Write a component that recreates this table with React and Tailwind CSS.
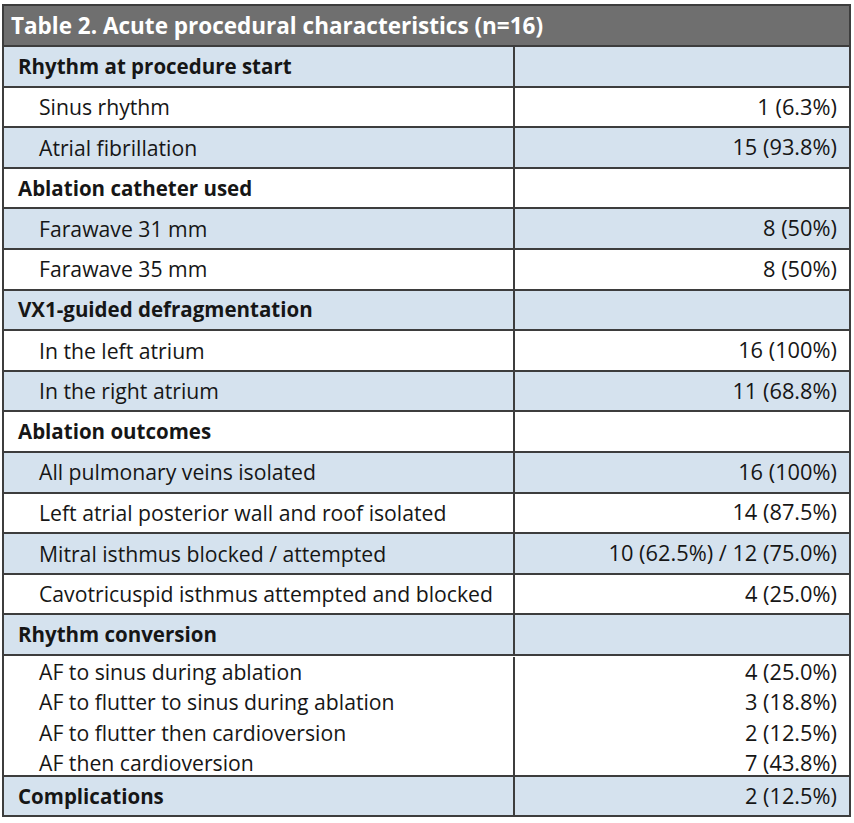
import React from 'react';

const rows = [
    { label: 'Rhythm at procedure start', section: true },
    { label: 'Sinus rhythm', value: '1 (6.3%)' },
    { label: 'Atrial fibrillation', value: '15 (93.8%)' },
    { label: 'Ablation catheter used', section: true },
    { label: 'Farawave 31 mm', value: '8 (50%)' },
    { label: 'Farawave 35 mm', value: '8 (50%)' },
    { label: 'VX1-guided defragmentation', section: true },
    { label: 'In the left atrium', value: '16 (100%)' },
    { label: 'In the right atrium', value: '11 (68.8%)' },
    { label: 'Ablation outcomes', section: true },
    { label: 'All pulmonary veins isolated', value: '16 (100%)' },
    { label: 'Left atrial posterior wall and roof isolated', value: '14 (87.5%)' },
    { label: 'Mitral isthmus blocked / attempted', value: '10 (62.5%) / 12 (75.0%)' },
    { label: 'Cavotricuspid isthmus attempted and blocked', value: '4 (25.0%)' },
    { label: 'Rhythm conversion', section: true },
];

const conversion = [
    ['AF to sinus during ablation', '4 (25.0%)'],
    ['AF to flutter to sinus during ablation', '3 (18.8%)'],
    ['AF to flutter then cardioversion', '2 (12.5%)'],
    ['AF then cardioversion', '7 (43.8%)'],
];

const App = () => {
    return (
        <div className="w-[854px] h-[823px] bg-white pl-[2px] pt-[4px] text-[#161616] font-['Open_Sans','Liberation_Sans',sans-serif] [font-variant-ligatures:none]">
            <div className="w-[849px] border-2 border-[#3d3d3d]">
                <div className="h-[41px] bg-[#6f6f6f] border-b-2 border-[#3d3d3d] flex items-center px-[7px] text-white font-bold text-[22.5px]">
                    Table 2. Acute procedural characteristics (n=16)
                </div>
                {rows.map((r, i) => (
                    <div
                        key={r.label}
                        className={`h-[40.6px] grid grid-cols-[511px_1fr] border-b-2 border-[#3d3d3d] ${i % 2 === 0 ? 'bg-[#d5e2ee]' : 'bg-white'}`}
                    >
                        <div className={`flex items-center border-r-2 border-[#3d3d3d] ${r.section ? 'pl-[14px] font-bold text-[20.5px]' : 'pl-[35px] text-[21.2px]'}`}>
                            {r.label}
                        </div>
                        <div className="flex items-center justify-end pr-[12px] text-[21.8px]">{r.value}</div>
                    </div>
                ))}
                <div className="h-[121px] grid grid-cols-[511px_1fr] border-b-2 border-[#3d3d3d] bg-white leading-[30.4px] py-[1px]">
                    <div className="flex flex-col justify-center border-r-2 border-[#3d3d3d] pl-[35px] text-[21.2px]">
                        {conversion.map(([l]) => <div key={l}>{l}</div>)}
                    </div>
                    <div className="flex flex-col justify-center items-end pr-[12px] text-[21.8px]">
                        {conversion.map(([l, v]) => <div key={l}>{v}</div>)}
                    </div>
                </div>
                <div className="h-[38px] grid grid-cols-[511px_1fr] bg-[#d5e2ee]">
                    <div className="flex items-center border-r-2 border-[#3d3d3d] pl-[14px] font-bold text-[20.5px]">Complications</div>
                    <div className="flex items-center justify-end pr-[12px] text-[21.8px]">2 (12.5%)</div>
                </div>
            </div>
        </div>
    );
};

export default App;
